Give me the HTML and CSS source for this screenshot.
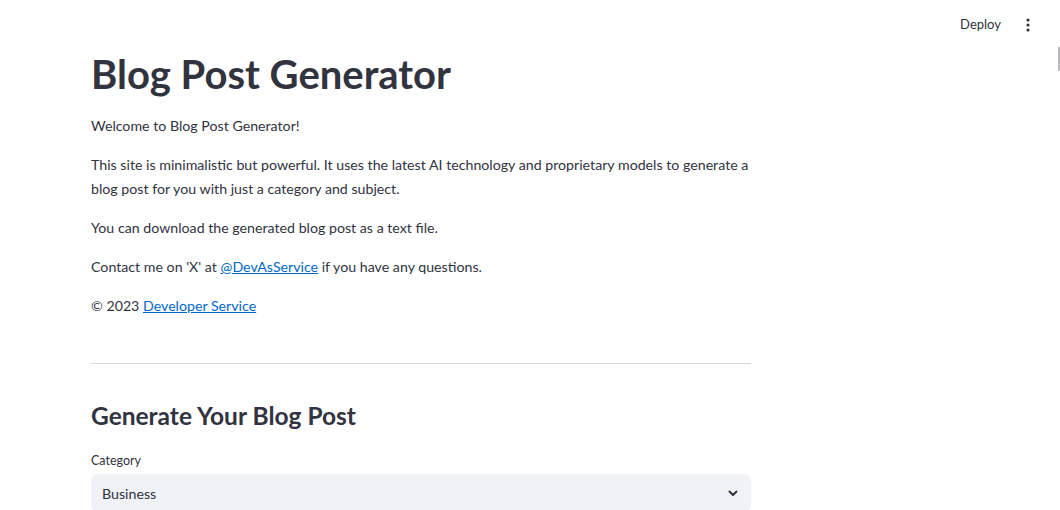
FILE: index.html
```html
<!DOCTYPE html>
<html lang="en">
<head>
<meta charset="utf-8">
<title>Blog Post Generator</title>
<link rel="stylesheet" href="styles.css">
</head>
<body>
<div class="app">
  <header class="topbar">
    <span class="deploy">Deploy</span>
    <span class="menu" aria-label="Main menu">
      <svg width="4" height="14" viewBox="0 0 4 14"><circle cx="2" cy="2" r="1.6"/><circle cx="2" cy="7" r="1.6"/><circle cx="2" cy="12" r="1.6"/></svg>
    </span>
  </header>
  <div class="scrollthumb"></div>
  <main class="main">
    <h1 class="title">Blog Post Generator</h1>
    <div class="texts">
      <p>Welcome to Blog Post Generator!</p>
      <p>This site is minimalistic but powerful. It uses the latest AI technology and proprietary models to generate a blog post for you with just a category and subject.</p>
      <p>You can download the generated blog post as a text file.</p>
      <p>Contact me on 'X' at <a href="#">@DevAsService</a> if you have any questions.</p>
      <p>© 2023 <a href="#">Developer Service</a></p>
    </div>
    <hr class="divider">
    <h3 class="subtitle">Generate Your Blog Post</h3>
    <label class="label">Category</label>
    <div class="select">
      <span>Business</span>
      <svg class="chev" width="10" height="7" viewBox="0 0 10 7"><path d="M1.5 1.5 L5 5 L8.5 1.5" fill="none" stroke="#31333F" stroke-width="2" stroke-linecap="round" stroke-linejoin="round"/></svg>
    </div>
  </main>
</div>
</body>
</html>
```
FILE: styles.css
```css
html, body {
  margin: 0;
  padding: 0;
  background: #ffffff;
  color: #31333F;
  font-family: Lato, "Source Sans Pro", "Noto Sans", sans-serif;
  overflow: hidden;
}
.app {
  display: flex;
  flex-direction: column;
  width: 1060px;
  min-height: 510px;
}
.topbar {
  flex-shrink: 0;
  height: 50px;
  display: flex;
  justify-content: flex-end;
  align-items: flex-start;
  padding-right: 30px;
  box-sizing: border-box;
}
.deploy {
  margin-top: 16px;
  font-size: 13px;
  line-height: 16px;
  color: #31333F;
}
.menu {
  margin-top: 18px;
  margin-left: 25px;
  display: flex;
}
.menu svg { fill: #31333F; }
.scrollthumb {
  position: absolute;
  left: 1058px;
  top: 47px;
  width: 2px;
  height: 24px;
  background: #b9b9bd;
}
.main {
  flex-shrink: 0;
  width: 660px;
  margin-left: 91px;
  display: flex;
  flex-direction: column;
}
.title {
  margin: 0;
  font-size: 40px;
  line-height: 48px;
  font-weight: 700;
  color: #31333F;
}
.texts {
  margin-top: 15.5px;
  display: flex;
  flex-direction: column;
  gap: 15px;
}
.texts p {
  margin: 0;
  font-size: 14.2px;
  line-height: 24px;
}
.texts a {
  color: #0068c9;
  text-decoration: underline;
}
.divider {
  margin: 45.5px 0 0;
  border: 0;
  height: 1px;
  background: rgba(49, 51, 63, 0.2);
}
.subtitle {
  margin: 37px 0 0;
  font-size: 24.5px;
  line-height: 30px;
  font-weight: 700;
  color: #31333F;
}
.label {
  margin-top: 21px;
  font-size: 12.5px;
  line-height: 18px;
}
.select {
  flex-shrink: 0;
  margin-top: 4px;
  height: 38px;
  background: #f0f2f6;
  border-radius: 7px;
  display: flex;
  align-items: center;
  justify-content: space-between;
  padding: 0 13px 0 11px;
  font-size: 14.2px;
  box-sizing: border-box;
}
.chev { display: block; }
```
